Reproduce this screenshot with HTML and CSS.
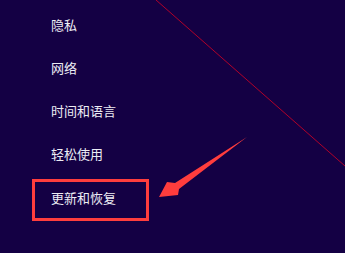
FILE: index.html
```html
<!DOCTYPE html>
<html lang="zh-CN">

<head>
  <meta charset="UTF-8">
  <meta name="viewport" content="width=device-width, initial-scale=1.0">
  <title>设置</title>
  <link rel="stylesheet" href="styles.css">
</head>

<body>
  <div class="settings">
    <ul class="menu">
      <li class="menu-item">隐私</li>
      <li class="menu-item">网络</li>
      <li class="menu-item">时间和语言</li>
      <li class="menu-item">轻松使用</li>
      <li class="menu-item current">更新和恢复</li>
    </ul>

    <svg class="marks" width="345" height="253" viewBox="0 0 345 253">
      <line x1="156" y1="0" x2="345" y2="166" stroke="#b0002a" stroke-width="1" />
      <polygon points="247,137 175,183 167,182 159,197 178,195 179,189" fill="#ff3d3d" />
    </svg>
  </div>
</body>

</html>
```

FILE: styles.css
```css
html,
body {
  margin: 0;
  height: 100%;
}

body {
  background-color: #140044;
  font-family: "Noto Sans CJK SC", "Microsoft YaHei", sans-serif;
  color: #ececf4;
  overflow: hidden;
}

.settings {
  position: relative;
  width: 345px;
  height: 253px;
}

.menu {
  list-style: none;
  margin: 0;
  padding: 3px 0 0 51px;
}

.menu-item {
  height: 43px;
  line-height: 43px;
  font-size: 13px;
}

.menu-item.current {
  box-sizing: border-box;
  width: 117px;
  height: 42px;
  margin: 4px 0 0 -19px;
  padding: 0 0 4px 16px;
  line-height: 32px;
  border: 3px solid #ff3d3d;
}

.marks {
  position: absolute;
  top: 0;
  left: 0;
  pointer-events: none;
}
```
